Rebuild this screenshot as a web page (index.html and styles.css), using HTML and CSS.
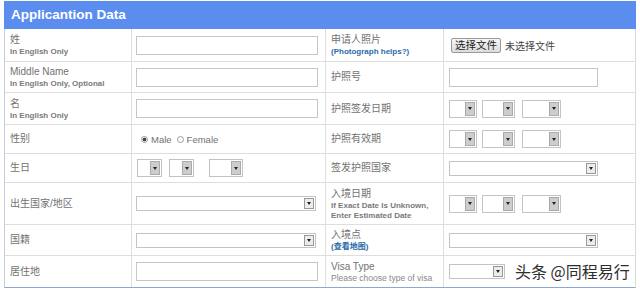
FILE: index.html
```html
<!DOCTYPE HTML>
<html>
<head>
<meta charset="utf-8">
<title>Applicantion Data</title>
<link rel="stylesheet" href="styles.css">
</head>

<body>
<div class="panel">
	<div class="panel-head">Applicantion Data</div>
	<div class="form">
		<div class="lab"><span>姓</span><small>In English Only</small></div>
		<div class="fld"><input type="text" class="txt"></div>
		<div class="lab"><span>申请人照片</span><small class="link">(Photograph helps?)</small></div>
		<div class="fld fld2 last"><span class="filebtn">选择文件</span><span class="nofile">未选择文件</span></div>

		<div class="lab"><span>Middle Name</span><small>In English Only, Optional</small></div>
		<div class="fld"><input type="text" class="txt"></div>
		<div class="lab"><span>护照号</span></div>
		<div class="fld fld2 last"><input type="text" class="txt short"></div>

		<div class="lab"><span>名</span><small>In English Only</small></div>
		<div class="fld"><input type="text" class="txt"></div>
		<div class="lab"><span>护照签发日期</span></div>
		<div class="fld fld2 last"><span class="sel w28 m5"><i></i></span><span class="sel w33 m7"><i></i></span><span class="sel w39"><i></i></span></div>

		<div class="lab"><span>性别</span></div>
		<div class="fld radios"><span class="rb on"></span>Male<span class="rb"></span>Female</div>
		<div class="lab"><span>护照有效期</span></div>
		<div class="fld fld2 last"><span class="sel w28 m5"><i></i></span><span class="sel w33 m7"><i></i></span><span class="sel w39"><i></i></span></div>

		<div class="lab"><span>生日</span></div>
		<div class="fld dates-left"><span class="sel w25 m7"><i></i></span><span class="sel w25 m15"><i></i></span><span class="sel w34"><i></i></span></div>
		<div class="lab"><span>签发护照国家</span></div>
		<div class="fld fld2 last"><span class="sel big w149"><i></i></span></div>

		<div class="lab"><span>出生国家/地区</span></div>
		<div class="fld"><span class="sel big w180"><i></i></span></div>
		<div class="lab"><span>入境日期</span><small>If Exact Date Is Unknown,</small><small>Enter Estimated Date</small></div>
		<div class="fld fld2 last"><span class="sel w28 m5"><i></i></span><span class="sel w33 m7"><i></i></span><span class="sel w39"><i></i></span></div>

		<div class="lab"><span>国籍</span></div>
		<div class="fld"><span class="sel big w180"><i></i></span></div>
		<div class="lab"><span>入境点</span><small class="link">(查看地图)</small></div>
		<div class="fld fld2 last"><span class="sel big w149"><i></i></span></div>

		<div class="lab bottom"><span>居住地</span></div>
		<div class="fld bottom"><input type="text" class="txt"></div>
		<div class="lab bottom"><span>Visa Type</span><small class="plain">Please choose type of visa</small></div>
		<div class="fld fld2 last bottom"><span class="sel big w56"><i></i></span></div>
	</div>
</div>
<div class="mark">头条 @同程易行</div>
</body>
</html>
```

FILE: styles.css
```css
body { margin:0; font-family:"Liberation Sans", Arial, "Noto Sans CJK SC", sans-serif; color:#666; background:#fff;}
.panel { width:632px; margin:1px 0 0 4px;}
.panel-head { height:28px; line-height:28px; background:#5b8def; color:#fff; font-size:13.5px; font-weight:bold; padding-left:7px;}
.form { display:grid; grid-template-columns:127px 194px 118px 191px; grid-template-rows:33px 31px 32px 29px 29px 42px 31px 31px; border:1px solid #dadada; border-top:0; border-left-color:#c3cde0; border-bottom-color:#8ea6d4;}
.form > div { box-sizing:border-box; border-right:1px solid #dedede; border-bottom:1px solid #dedede; display:flex; align-items:center;}
.form > .last { border-right:0;}
.form > .bottom { border-bottom:0;}
.lab { flex-direction:column; align-items:flex-start !important; justify-content:center; padding-left:5px; font-size:10px; line-height:12px; color:#727272;}
.lab small { display:block; font-size:8px; line-height:9px; font-weight:bold; color:#7a7a7a; margin-top:1px;}
.lab small.link { color:#2a6aa8;}
.lab small.plain { font-weight:normal; font-size:8.5px; color:#888;}
.fld { padding-left:4px;}
.fld2 { padding-left:5px;}
.txt { width:182px; height:19px; box-sizing:border-box; border:1px solid #c6c6c6; margin:0; padding:0; background:#fff;}
.txt.short { width:149px;}
.filebtn { font-size:10.5px; line-height:13px; color:#222; padding:0 3px; border:1px solid #9a9a9a; border-radius:2px; background:linear-gradient(#f6f6f6, #dcdcdc); margin:0 4px 0 2px;}
.nofile { font-size:10px; color:#444;}
.radios { font-size:9.5px; color:#727272; padding-left:9px;}
.rb { width:7px; height:7px; border:1px solid #9c9c9c; border-radius:50%; box-sizing:border-box; margin-right:3px; background:#fff;}
.rb.on { background:radial-gradient(circle, #444 0, #444 1.6px, #fff 2.2px);}
.radios .rb:not(.on) { margin-left:5px;}
.dates-left { padding-left:5px;}
.sel { display:flex; justify-content:flex-end; height:18px; box-sizing:border-box; border:1px solid #c4c4c4; background:#fff;}
.sel i { width:8px; margin:1px; background:#cdcdcd; border:1px solid #aaa; display:flex; align-items:center; justify-content:center;}
.sel i:after { content:""; border-left:2px solid transparent; border-right:2px solid transparent; border-top:3px solid #222;}
.sel.big { height:15px;}
.sel.big i { width:8px; background:#ececec; border-color:#999;}
.w25 { width:25px;} .w28 { width:28px;} .w33 { width:33px;} .w34 { width:34px;} .w39 { width:39px;}
.w56 { width:56px;} .w149 { width:149px;} .w180 { width:180px;}
.m5 { margin-right:5px;} .m7 { margin-right:7px;} .m15 { margin-right:15px;}
.mark { position:absolute; left:515px; top:261px; font-family:"Noto Sans CJK SC", sans-serif; font-size:16px; line-height:20px; color:#2e2e2e; text-shadow:0 0 2px #fff;}
```
